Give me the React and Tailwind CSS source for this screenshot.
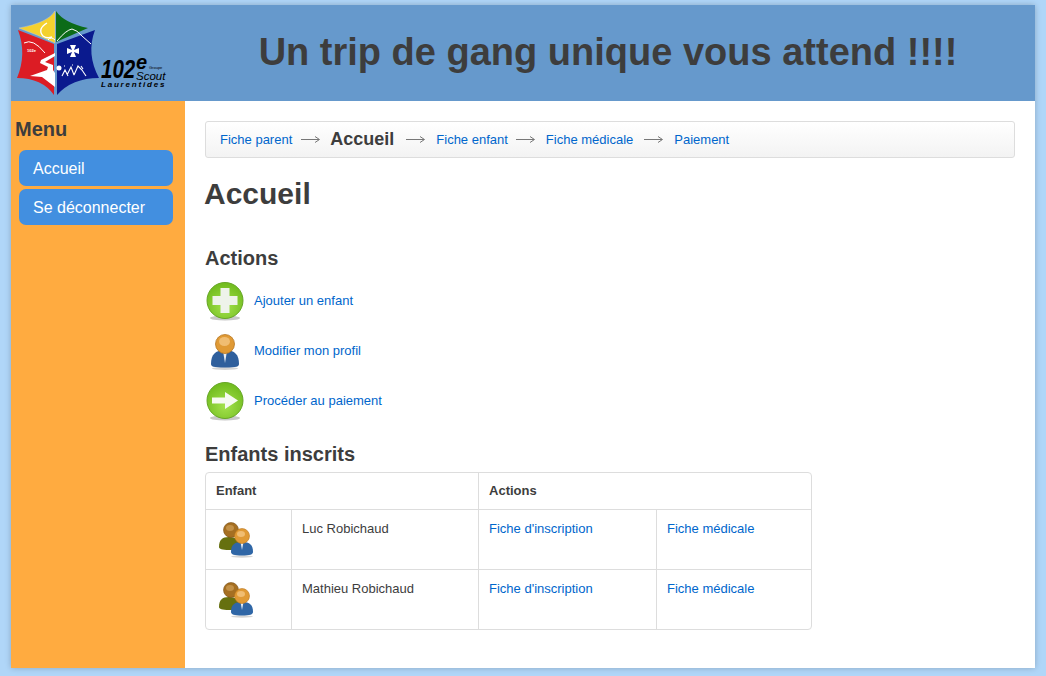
import React from 'react';

const GreenDisc = ({ children }) => (
  <svg width="40" height="40" viewBox="0 0 40 40">
    <defs>
      <radialGradient id="discFill" cx="0.5" cy="0.65" r="0.6">
        <stop offset="0" stopColor="#a4e24c" />
        <stop offset="1" stopColor="#73bd20" />
      </radialGradient>
    </defs>
    <ellipse cx="20" cy="37" rx="15" ry="2.500" fill="#c8c8c8" />
    <circle cx="20" cy="19.500" r="18" fill="url(#discFill)" stroke="#66a626" strokeWidth="1" />
    {children}
  </svg>
);

const PlusIcon = () => (
  <GreenDisc>
    <path d="M15.500 7h9v8h8v9h-8v8h-9v-8h-8v-9h8z" fill="#eef3ea" />
  </GreenDisc>
);

const ArrowIcon = () => (
  <GreenDisc>
    <path d="M7 16.500h13V11l13 8.500L20 28v-5.500H7z" fill="#f6faf0" />
  </GreenDisc>
);

const PersonIcon = () => (
  <svg width="40" height="40" viewBox="0 0 40 40">
    <ellipse cx="20" cy="37.500" rx="13" ry="1.500" fill="#d4d4d4" />
    <path d="M6 33c0-9 4-14 14-14s14 5 14 14c0 2.500-2 3.500-14 3.500S6 35.500 6 33z" fill="#2f5f9c" />
    <path d="M18 20h4l-2 12z" fill="#e8eef5" />
    <circle cx="20" cy="13" r="9.500" fill="#e09a35" stroke="#b8761f" strokeWidth="0.8" />
    <ellipse cx="19.500" cy="10.500" rx="5.500" ry="4.500" fill="#f0bd72" />
  </svg>
);

const PairIcon = () => (
  <svg width="36" height="36" viewBox="0 0 36 36">
    <path d="M0 25c0-7 3-10 10-10s10 3 10 10c0 2-3 3-10 3S0 27 0 25z" fill="#66700f" />
    <circle cx="12" cy="8" r="7.500" fill="#a56f22" stroke="#7b5118" strokeWidth="0.6" />
    <ellipse cx="11" cy="6" rx="4" ry="3" fill="#c39147" />
    <ellipse cx="23" cy="34.500" rx="11" ry="1.200" fill="#d4d4d4" />
    <path d="M12 30c0-7 3-10 11-10s11 3 11 10c0 2.500-3 3.500-11 3.500S12 32.500 12 30z" fill="#2f66a6" />
    <path d="M21.500 20h3L23 28z" fill="#e8eef5" />
    <circle cx="23" cy="14" r="7.500" fill="#e09a35" stroke="#b8761f" strokeWidth="0.6" />
    <ellipse cx="22" cy="12" rx="4" ry="3" fill="#f0bd72" />
  </svg>
);

const ScoutLogo = () => (
  <svg width="90" height="90" viewBox="0 0 90 90">
    <path d="M43 3Q36 15 7 20Q26 27 43 35Z" fill="#f4d12e" stroke="#cfd6dd" strokeWidth="0.4" />
    <path d="M44 3Q52 15 76 20Q60 27 44 34Z" fill="#0c6b18" />
    <path d="M45 36L83 22Q74 46 87 70Q60 70 45 87Z" fill="#0a1a8e" />
    <path d="M42 36L6 22Q15 46 5 70Q30 70 42 87Z" fill="#dc1c24" />
    {/* crescent and small arc on the yellow part */}
    <path d="M35 15Q25 21 31 28Q35 31 40 29" fill="none" stroke="#fff" strokeWidth="1.400" />
    <path d="M36 32Q39 28 43 32" fill="none" stroke="#fff" strokeWidth="1" />
    {/* mountain line over green and blue */}
    <path d="M45 33Q54 22 60 21Q65 22 70 28L79 36" fill="none" stroke="#fff" strokeWidth="1" />
    <path d="M12 35Q21 30 33 45" fill="none" stroke="#fff" strokeWidth="1" />
    <text x="15" y="44" fontSize="4" fontWeight="700" fill="#fff">102e</text>
    {/* river */}
    <path d="M43 45L29 52L28 55L36 59L35 62L18 68L30 69L43 79V65L41 62L41 57L33 54L43 48Z" fill="#fff" />
    {/* cross */}
    <path d="M58 37H64L62 42L67 40V46L62 44L64 49H58L60 44L55 46V40L60 42Z" fill="#fff" />
    {/* scouts silhouettes */}
    <path d="M50 68l3-6 3 6M55 67l4-8 3 8M62 67l4-9 4 4 4 6M69 58l2 3M52 58h1M60 57h1" fill="none" stroke="#fff" strokeWidth="1.100" />
    <circle cx="47" cy="60" r="2.500" fill="#fff" />
  </svg>
);

const rows = ['Luc Robichaud', 'Mathieu Robichaud'];
const actions = [
  ['Ajouter un enfant', PlusIcon],
  ['Modifier mon profil', PersonIcon],
  ['Procéder au paiement', ArrowIcon],
];

const Arrow = ({ className }) => (
  <svg width="19" height="9" viewBox="0 0 19 9" className={`shrink-0 ${className}`}>
    <path d="M0 4.500h18M14 1.500l4.500 3-4.500 3" fill="none" stroke="#777" strokeWidth="1" />
  </svg>
);

export default function App() {
  return (
    <div className="min-h-[676px] bg-[#b0d6f8] px-[11px] pt-[5px] pb-2 font-['Liberation_Sans',Arial,sans-serif] text-[13px] text-[#3d3d3d]">
      <div className="flex h-[663px] flex-col shadow-[0_0_6px_rgba(0,0,0,0.22)]">
        <header className="flex h-[96px] shrink-0 bg-[#6699cc]">
          <div className="relative w-[170px] shrink-0 pl-px pt-[3px]">
            <ScoutLogo />
            <span className="absolute left-[90px] top-[53px] origin-left scale-x-[0.82] text-[25px] font-bold italic leading-[23px] text-black">102</span>
            <span className="absolute left-[125px] top-[49px] text-[20px] font-bold italic leading-[16px] text-black">e</span>
            <span className="absolute left-[138px] top-[61px] text-[4px] leading-[4px] text-black">Groupe</span>
            <span className="absolute left-[125px] top-[66px] text-[11.500px] italic leading-[10px] text-black">Scout</span>
            <span className="absolute left-[90px] top-[76px] whitespace-nowrap text-[8px] font-bold italic leading-[8px] tracking-[1.800px] text-black">Laurentides</span>
          </div>
          <h1 className="flex-1 pt-[23px] text-center text-[38px] font-bold leading-[48px] whitespace-nowrap">
            Un trip de gang unique vous attend !!!!
          </h1>
        </header>
        <div className="flex flex-1">
          <aside className="w-[174px] shrink-0 bg-[#ffab40] pl-[4px] pt-[16px]">
            <h2 className="text-[20px] font-bold leading-[24px]">Menu</h2>
            <nav className="mt-[9px] flex flex-col gap-[3px] pl-[4px] pr-[12px]">
              <a className="h-[36px] rounded-[7px] bg-[#428fe0] pl-[14px] text-[16px] leading-[37px] text-white">Accueil</a>
              <a className="h-[36px] rounded-[7px] bg-[#428fe0] pl-[14px] text-[16px] leading-[37px] text-white">Se déconnecter</a>
            </nav>
          </aside>
          <main className="flex-1 bg-white px-[20px] pt-[20px]">
            <div className="flex h-[37px] items-center rounded-[3px] border border-[#ddd] bg-gradient-to-b from-white to-[#f3f3f3] pl-[14px]">
              <a className="text-[#0066cc]">Fiche parent</a>
              <Arrow className="ml-[9px] mr-[10px]" />
              <span className="text-[18px] font-bold">Accueil</span>
              <Arrow className="ml-[12px] mr-[11px]" />
              <a className="text-[#0066cc]">Fiche enfant</a>
              <Arrow className="ml-[8px] mr-[11px]" />
              <a className="text-[#0066cc]">Fiche médicale</a>
              <Arrow className="ml-[11px] mr-[11px]" />
              <a className="text-[#0066cc]">Paiement</a>
            </div>
            <h1 className="-ml-px mt-[18px] text-[30px] font-bold leading-[36px]">Accueil</h1>
            <h2 className="mt-[34px] text-[20px] font-bold leading-[24px]">Actions</h2>
            <div className="mt-[11px] flex flex-col gap-[10px]">
              {actions.map(([label, Icon]) => (
                <div key={label} className="flex h-[40px] items-center gap-[9px]">
                  <Icon />
                  <a className="text-[#0066cc]">{label}</a>
                </div>
              ))}
            </div>
            <h2 className="mt-[21px] text-[20px] font-bold leading-[24px]">Enfants inscrits</h2>
            <div className="mt-[6px] w-[607px] overflow-hidden rounded-[4px] border border-[#ddd]">
              <table className="w-full table-fixed border-separate border-spacing-0">
                <colgroup>
                  <col className="w-[86px]" />
                  <col className="w-[187px]" />
                  <col className="w-[178px]" />
                  <col className="w-[154px]" />
                </colgroup>
                <thead>
                  <tr className="h-[36px]">
                    <th colSpan={2} className="border-r border-[#ddd] pl-[10px] text-left font-bold">Enfant</th>
                    <th colSpan={2} className="pl-[10px] text-left font-bold">Actions</th>
                  </tr>
                </thead>
                <tbody>
                  {rows.map((name) => (
                    <tr key={name} className="h-[60px] align-top">
                      <td className="border-r border-t border-[#ddd] pl-[13px] pt-[12px]"><PairIcon /></td>
                      <td className="border-r border-t border-[#ddd] pl-[10px] pt-[9px]">{name}</td>
                      <td className="border-r border-t border-[#ddd] pl-[10px] pt-[9px] text-[#0066cc]">Fiche d'inscription</td>
                      <td className="border-t border-[#ddd] pl-[10px] pt-[9px] text-[#0066cc]">Fiche médicale</td>
                    </tr>
                  ))}
                </tbody>
              </table>
            </div>
          </main>
        </div>
      </div>
    </div>
  );
}
